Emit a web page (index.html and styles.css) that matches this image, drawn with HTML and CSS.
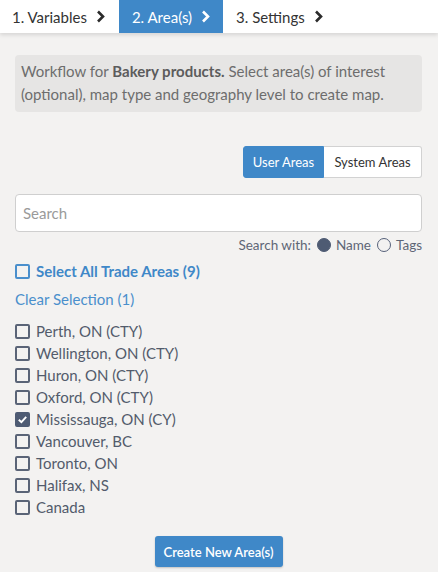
FILE: index.html
```html
<!DOCTYPE html>
<html>
<head>
<meta charset="utf-8">
<link rel="stylesheet" href="styles.css">
</head>
<body>
<nav class="tabs">
  <div class="tab first">1. Variables
    <svg class="chev" viewBox="0 0 9 13" width="9" height="13"><polyline points="2,1.5 7,6.5 2,11.5" /></svg>
  </div>
  <div class="tab active">2. Area(s)
    <svg class="chev" viewBox="0 0 9 13" width="9" height="13"><polyline points="2,1.5 7,6.5 2,11.5" /></svg>
  </div>
  <div class="tab">3. Settings
    <svg class="chev" viewBox="0 0 9 13" width="9" height="13"><polyline points="2,1.5 7,6.5 2,11.5" /></svg>
  </div>
</nav>
<main class="content">
  <div class="info">Workflow for <b>Bakery products.</b> Select area(s) of interest (optional), map type and geography level to create map.</div>
  <div class="toggle-row">
    <div class="toggle">
      <span class="seg on">User Areas</span><span class="seg">System Areas</span>
    </div>
  </div>
  <div class="search"><span class="placeholder">Search</span></div>
  <div class="search-with">
    <span class="lbl">Search with:</span>
    <span class="radio checked"></span><span class="opt">Name</span>
    <span class="radio"></span><span>Tags</span>
  </div>
  <div class="select-all"><span class="cb blue"></span>Select All Trade Areas (9)</div>
  <div class="clear">Clear Selection (1)</div>
  <ul class="list">
    <li><span class="cb"></span>Perth, ON (CTY)</li>
    <li><span class="cb"></span>Wellington, ON (CTY)</li>
    <li><span class="cb"></span>Huron, ON (CTY)</li>
    <li><span class="cb"></span>Oxford, ON (CTY)</li>
    <li><span class="cb checked"><svg viewBox="0 0 15 15" width="15" height="15"><polyline points="3.8,7.7 6.4,10.2 11.2,4.9"/></svg></span>Mississauga, ON (CY)</li>
    <li><span class="cb"></span>Vancouver, BC</li>
    <li><span class="cb"></span>Toronto, ON</li>
    <li><span class="cb"></span>Halifax, NS</li>
    <li><span class="cb"></span>Canada</li>
  </ul>
  <div class="btn-row"><span class="btn">Create New Area(s)</span></div>
</main>
</body>
</html>
```
FILE: styles.css
```css
* { box-sizing: border-box; }
html, body { margin: 0; padding: 0; }
body {
  background: #f3f2f1;
  font-family: Lato, "Open Sans", sans-serif;
  width: 438px;
  height: 572px;
  overflow: hidden;
}
.tabs {
  display: flex;
  height: 33px;
  background: #fff;
  box-shadow: 0 2px 4px rgba(0,0,0,0.12);
  position: relative;
}
.tab {
  display: flex;
  align-items: center;
  gap: 9px;
  padding: 0 13px;
  font-size: 15px;
  color: #333;
}
.tab.first { padding-left: 12px; padding-right: 14px; }
.tab.active { background: #3f88c8; color: #fff; }
.chev polyline { fill: none; stroke: #2b2b2b; stroke-width: 2.6; stroke-linecap: butt; }
.tab.active .chev polyline { stroke: #fff; }
.content { padding: 22px 16px 0 15px; }
.info {
  background: #e6e5e4;
  border-radius: 4px;
  padding: 5px 6px 6px 6px;
  font-size: 15px;
  line-height: 23px;
  color: #6d6d6d;
}
.info b { color: #5c5c5c; }
.toggle-row { display: flex; justify-content: flex-end; margin-top: 34px; }
.toggle { display: flex; height: 32px; }
.seg {
  display: flex; align-items: center; justify-content: center;
  font-size: 13px;
  background: #fff;
  border: 1px solid #d2d2d2;
  color: #333;
}
.seg.on { background: #3f88c8; border-color: #3f88c8; color: #fff; width: 81px; border-radius: 3px 0 0 3px; }
.seg:not(.on) { width: 98px; border-left: none; border-radius: 0 3px 3px 0; }
.search {
  margin-top: 16px;
  height: 38px;
  background: #fff;
  border: 1px solid #cfcfcf;
  border-radius: 4px;
  display: flex; align-items: center;
  padding-left: 7px;
}
.placeholder { font-size: 15px; color: #9a9a9a; }
.search-with {
  display: flex; justify-content: flex-end; align-items: center;
  margin-top: 5px;
  font-size: 13.5px;
  color: #5e6676;
  height: 16px;
}
.search-with .lbl { margin-right: 6px; }
.search-with .opt { margin-right: 6px; }
.radio {
  display: inline-block;
  width: 14px; height: 14px;
  border-radius: 50%;
  border: 1.5px solid #56617a;
  margin-right: 5px;
}
.radio.checked { background: #4e5b73; border-color: #4e5b73; }
.cb {
  display: inline-block;
  width: 15px; height: 15px;
  border: 2px solid #5a6477;
  border-radius: 2px;
  margin-right: 6px;
  flex: none;
  position: relative;
}
.cb.blue { border-color: #4a8fcc; }
.cb.checked { background: #4e5b73; border-color: #4e5b73; }
.cb.checked svg { position: absolute; left: -2px; top: -2px; }
.cb.checked polyline { fill: none; stroke: #fff; stroke-width: 1.9; }
.select-all {
  display: flex; align-items: center;
  margin-top: 9px;
  font-size: 15px;
  font-weight: bold;
  color: #3f88c8;
}
.clear {
  margin-top: 10px;
  font-size: 15px;
  color: #4a8fcc;
}
.list { list-style: none; margin: 12px 0 0; padding: 0; }
.list li {
  display: flex; align-items: center;
  height: 22px;
  font-size: 15px;
  color: #525b6b;
}
.btn-row { display: flex; justify-content: center; margin-top: 18px; }
.btn {
  display: flex; align-items: center; justify-content: center;
  width: 128px; height: 31px;
  background: #3f88c8;
  color: #fff;
  font-size: 13px;
  font-weight: 600;
  border-radius: 3px;
  box-shadow: 0 1px 2px rgba(0,0,0,0.2);
}
```
